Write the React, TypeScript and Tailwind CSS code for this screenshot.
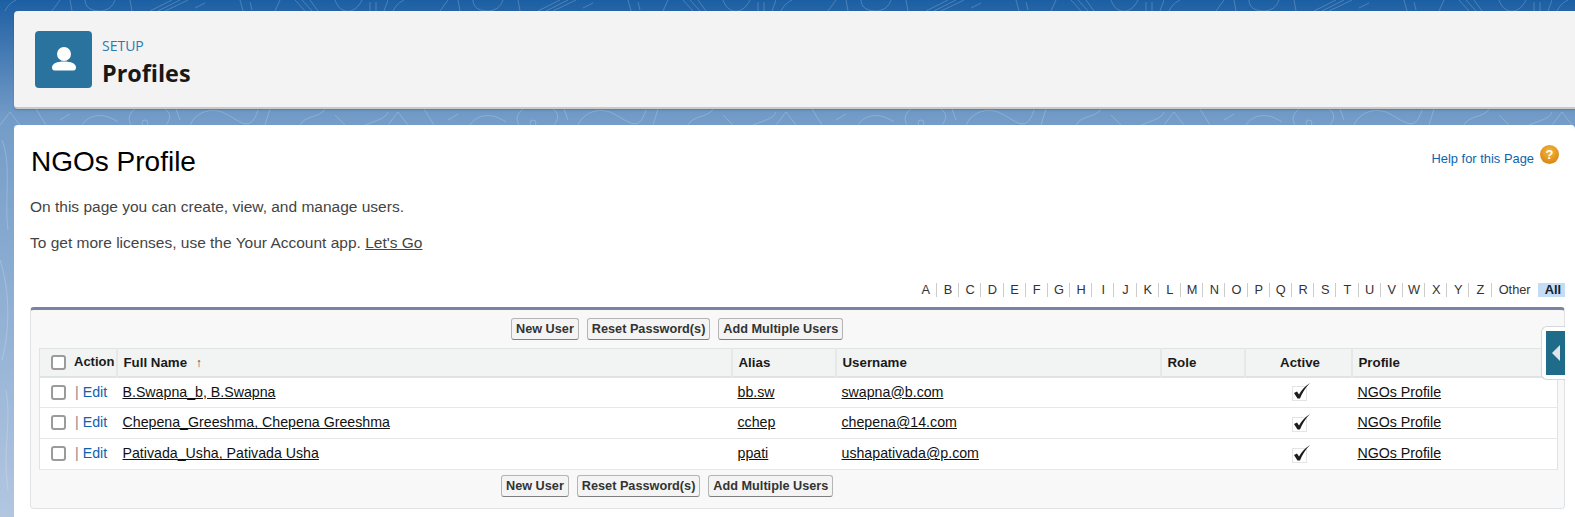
const letters = 'ABCDEFGHIJKLMNOPQRSTUVWXYZ'.split('');

const users = [
  { name: 'B.Swapna_b, B.Swapna', alias: 'bb.sw', username: 'swapna@b.com' },
  { name: 'Chepena_Greeshma, Chepena Greeshma', alias: 'cchep', username: 'chepena@14.com' },
  { name: 'Pativada_Usha, Pativada Usha', alias: 'ppati', username: 'ushapativada@p.com' },
];

const thClass = 'h-[28px] border-l-2 border-[#e6e8e8] px-[6px] pt-[2px] text-left text-[13.3px] font-bold text-[#1a1a1a]';

// Líneas de contorno del fondo; el dibujo se repite cada 388px
function Contours() {
  return (
    <svg className="absolute inset-0 h-full w-full" fill="none">
      <defs>
        <pattern id="contours" patternUnits="userSpaceOnUse" width="388" height="517">
          <g stroke="#ffffff" strokeOpacity="0.2" strokeWidth="1">
            <path d="M5 11 C 8 5 12 2 16 0 M60 0 L52 11 M70 0 L72 11 M85 0 C 85 8 92 11 100 11 C 108 11 113 6 115 0 M130 0 L132 11" />
            <path d="M150 11 L172 0 M158 11 L180 0 M165 11 L188 0 M195 8 L205 3 M240 0 L243 11 M250 2 L252 10 M275 11 L280 0" />
            <path d="M295 0 L305 11 M302 0 L312 11 M310 0 L318 11 M335 0 C 340 15 355 15 362 0 M370 2 L370 11 M376 2 L376 11 M384 11 L388 0" />
            <path d="M0 125 L10 112 L20 125 M36 109 L46 125 M60 120 L70 114 M82 125 C 90 113 105 113 118 122 M135 109 C 128 114 128 120 131 125" />
            <circle cx="145" cy="123" r="3" />
            <path d="M165 109 C 172 114 170 120 166 125 M176 109 L180 120 M190 125 C 196 112 210 108 222 112 C 240 120 250 135 258 110" />
            <path d="M270 109 L265 125 M300 125 C 305 115 320 118 325 109 M335 115 L345 125 M365 125 C 378 120 386 118 388 112" />
            <path d="M2 140 C 12 165 4 200 8 230 M0 260 C 10 290 10 330 2 360 M6 390 C 12 420 2 450 8 490" />
          </g>
        </pattern>
      </defs>
      <rect width="1575" height="517" fill="url(#contours)" />
    </svg>
  );
}

function ActionButtons({ className }: { className: string }) {
  return (
    <div className={`flex gap-2 ${className}`}>
      {['New User', 'Reset Password(s)', 'Add Multiple Users'].map((label) => (
        <button
          key={label}
          className="h-[22px] rounded-[3px] border border-[#b5b5b5] border-b-[#7f7f7f] bg-[#f4f4f4] px-1 text-[12.7px] leading-[20px] font-bold whitespace-nowrap text-[#333333]"
        >
          {label}
        </button>
      ))}
    </div>
  );
}

function Checkbox() {
  return <span className="block h-[15px] w-[15px] rounded-[3px] border-2 border-[#9b9b9b] bg-white" />;
}

function CheckedImage() {
  return (
    <svg width="18" height="18" viewBox="0 0 18 18" className="mx-auto block">
      <rect x="0.5" y="3.5" width="14" height="14" fill="none" stroke="#c9c9c9" strokeDasharray="1 1" />
      <path d="M2 10 L5 8.5 L7 11.5 C 9.5 7 13 3 18 0 C 13.5 4.5 10 10 8 15.5 L 5.5 15.5 Z" fill="#1c1c1c" />
    </svg>
  );
}

export default function App() {
  return (
    <div className="relative h-[517px] w-[1575px] overflow-hidden bg-gradient-to-b from-[#1b5fa3] via-[#739cc8] via-[23%] to-[#b2c6e0] font-['Liberation_Sans',Arial,sans-serif]">
      <Contours />

      <div className="relative flex flex-col pt-[11px] pl-[14px]">
        {/* Cabecera */}
        <div className="flex h-[98px] items-center gap-[10px] rounded-l-[4px] border-b-2 border-[#c9c9c9] bg-[#f3f3f3] pl-[21px] shadow-[0_1px_2px_rgba(0,0,0,0.18)]">
          <div className="flex h-[57px] w-[57px] items-center justify-center rounded-[4px] bg-[#2a739e]">
            <svg width="26" height="26" viewBox="0 0 26 26" fill="#ffffff">
              <circle cx="13" cy="8" r="7" />
              <path d="M1 21.5 C 1 17.5 6 15.5 13 15.5 C 20 15.5 25 17.5 25 21.5 C 25 23.5 24 24.5 22.5 24.5 H3.5 C 2 24.5 1 23.5 1 21.5 Z" />
            </svg>
          </div>
          <div className="pt-[7px] font-['Open_Sans',sans-serif]">
            <div className="text-[14px] leading-[18px] text-[#2a7ab0]">SETUP</div>
            <div className="mt-[2px] text-[23.4px] leading-[32px] font-bold text-[#181818]">Profiles</div>
          </div>
        </div>

        {/* Contenido */}
        <div className="relative mt-[16px] h-[392px] rounded-t-[4px] bg-white pt-[19px] pr-[10px] pl-[16px]">
          <div className="flex items-start justify-between">
            <h1 className="pl-[1px] text-[28px] leading-[36px] text-[#000000]">NGOs Profile</h1>
            <div className="flex items-start gap-[6px] pt-[1px] pr-[6px]">
              <a className="pt-[4px] text-[12.9px] text-[#0f62ae]">Help for this Page</a>
              <span className="flex h-[19px] w-[19px] items-center justify-center rounded-full bg-[radial-gradient(circle_at_50%_35%,#f6b73c,#cf7a08)] text-[13px] leading-none font-bold text-white">?</span>
            </div>
          </div>

          <p className="mt-[17px] text-[15.5px] leading-[20px] text-[#444444]">On this page you can create, view, and manage users.</p>
          <p className="mt-[16px] text-[15.5px] leading-[20px] text-[#444444]">
            To get more licenses, use the Your Account app. <a className="text-[#444444] underline">Let's Go</a>
          </p>

          {/* Filtro alfabético */}
          <div className="mt-[30px] flex h-[14px] items-center justify-end text-[12.8px] leading-[14px] text-[#333333]">
            {letters.map((letter) => (
              <span key={letter} className="flex w-[22.2px] justify-center border-r border-[#cccccc] pl-[1px]">{letter}</span>
            ))}
            <span className="px-[7px] text-[#333333]">Other</span>
            <span className="bg-[#c4dcf6] pr-[4px] pl-[7px] font-bold text-[#15202b]">All</span>
          </div>

          {/* Tabla de usuarios */}
          <div className="relative mt-[10px] h-[202px] rounded-[4px] border border-t-[3px] border-[#e0e3e5] border-t-[#7a83a1] bg-[#f8f8f8] px-[8px]">
            <ActionButtons className="mt-[8px] ml-[472px]" />
            <table className="mt-[8px] w-[1519px] table-fixed border-collapse border border-[#e0e3e5] bg-white">
              <colgroup>
                <col className="w-[77px]" />
                <col className="w-[615px]" />
                <col className="w-[104px]" />
                <col className="w-[325px]" />
                <col className="w-[84px]" />
                <col className="w-[107px]" />
                <col />
              </colgroup>
              <thead>
                <tr className="border-b-2 border-[#e0e3e5] bg-[#f2f3f3]">
                  <th className="h-[28px] text-left text-[13px] font-bold text-[#1a1a1a]">
                    <div className="flex items-center gap-[8px] pl-[11px]">
                      <Checkbox />
                      <span className="-mt-[1px]">Action</span>
                    </div>
                  </th>
                  <th className={thClass}>
                    Full Name <span className="ml-[5px] text-[12px] font-bold text-[#444444]">↑</span>
                  </th>
                  <th className={thClass}>Alias</th>
                  <th className={thClass}>Username</th>
                  <th className={thClass}>Role</th>
                  <th className="h-[28px] border-l-2 border-[#e6e8e8] pt-[2px] pr-[6px] pl-[10px] text-center text-[13.3px] font-bold text-[#1a1a1a]">Active</th>
                  <th className={thClass}>Profile</th>
                </tr>
              </thead>
              <tbody className="text-[14.2px] text-[#111111]">
                {users.map((user) => (
                  <tr key={user.alias} className="h-[31px] border-b border-[#e6e8e8]">
                    <td>
                      <div className="flex items-center pl-[11px]">
                        <Checkbox />
                        <span className="ml-[9px] text-[#8a8a8a]">|</span>
                        <a className="ml-[4px] text-[#0f62ae]">Edit</a>
                      </div>
                    </td>
                    <td className="px-[6px]"><a className="underline">{user.name}</a></td>
                    <td className="px-[6px]"><a className="underline">{user.alias}</a></td>
                    <td className="px-[6px]"><a className="underline">{user.username}</a></td>
                    <td className="px-[6px]"></td>
                    <td className="pr-[6px] pl-[12px]"><CheckedImage /></td>
                    <td className="px-[6px]"><a className="underline">NGOs Profile</a></td>
                  </tr>
                ))}
              </tbody>
            </table>
            <ActionButtons className="mt-[5px] ml-[462px]" />

            {/* Pestaña lateral */}
            <div className="absolute top-[16px] -right-[1px] h-[54px] w-[24px] rounded-l-[6px] border border-r-0 border-[#d5d8da] bg-white pt-[4px] pl-[4px]">
              <div className="flex h-[44px] w-[19px] items-center justify-center bg-[#1f6b8a]">
                <span className="h-0 w-0 border-y-[8px] border-r-[8px] border-y-transparent border-r-[#dfe5e8]" />
              </div>
            </div>
          </div>
        </div>
      </div>
    </div>
  );
}
